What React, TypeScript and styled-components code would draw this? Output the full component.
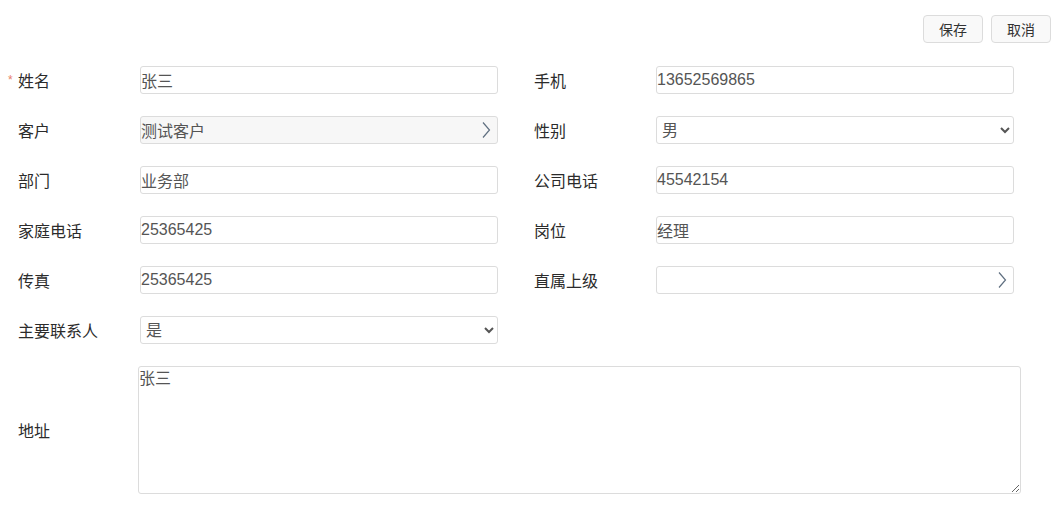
import React from "react";
import styled, { createGlobalStyle } from "styled-components";

const Global = createGlobalStyle`
  html, body { margin: 0; padding: 0; background: #fff; }
  body { font-family: "Liberation Sans", "Noto Sans CJK SC", sans-serif; color: #333; }
  * { box-sizing: border-box; }
`;

const Page = styled.div`
  width: 1057px;
  height: 513px;
  overflow: hidden;
  background: #fff;
`;

const Toolbar = styled.div`
  display: flex;
  justify-content: flex-end;
  gap: 8px;
  padding: 15px 6px 0 0;
`;

const Button = styled.button`
  width: 60px;
  height: 28px;
  border: 1px solid #dcdcdc;
  border-radius: 4px;
  background: #f9f9f9;
  color: #333;
  font-family: "Liberation Sans", "Noto Sans CJK SC", sans-serif;
  font-size: 14px;
  padding: 0;
  cursor: pointer;
`;

const Form = styled.div`
  display: flex;
  flex-direction: column;
  padding: 23px 0 0 8px;
`;

const Row = styled.div`
  display: flex;
  align-items: flex-start;
  height: 50px;
`;

const Field = styled.div<{ $gap?: number }>`
  display: flex;
  align-items: center;
  height: 28px;
  margin-right: ${(p) => p.$gap ?? 0}px;
`;

const Label = styled.label<{ $w: number }>`
  display: flex;
  align-items: center;
  width: ${(p) => p.$w}px;
  font-size: 16px;
  color: #2b2b2b;
  white-space: nowrap;
`;

const Star = styled.span<{ $show?: boolean }>`
  display: inline-block;
  width: 10px;
  color: #e8806a;
  font-size: 12px;
  visibility: ${(p) => (p.$show ? "visible" : "hidden")};
`;

const Input = styled.input<{ $readonly?: boolean }>`
  width: 358px;
  height: 28px;
  border: 1px solid #dcdcdc;
  border-radius: 3px;
  background: ${(p) => (p.$readonly ? "#f7f7f7" : "#fff")};
  color: #555;
  font-family: "Liberation Sans", "Noto Sans CJK SC", sans-serif;
  font-size: 16px;
  padding: 0 24px 0 0;
  outline: none;
`;

const PickerWrap = styled.div`
  position: relative;
  display: flex;
  align-items: center;
`;

const Chevron = styled.svg`
  position: absolute;
  right: 7px;
  top: 5px;
  width: 10px;
  height: 18px;
`;

const Select = styled.select`
  width: 358px;
  height: 28px;
  border: 1px solid #dcdcdc;
  border-radius: 3px;
  background: #fff;
  color: #555;
  font-family: "Liberation Sans", "Noto Sans CJK SC", sans-serif;
  font-size: 16px;
  padding: 0 0 0 1px;
  outline: none;
`;

const AreaRow = styled.div`
  display: flex;
  align-items: center;
`;

const TextArea = styled.textarea`
  width: 883px;
  height: 128px;
  border: 1px solid #dcdcdc;
  border-radius: 3px;
  color: #555;
  font-family: "Noto Sans CJK SC", sans-serif;
  font-size: 16px;
  line-height: 20px;
  padding: 0;
  margin: 0;
  outline: none;
`;

const Picker: React.FC<{ value: string; readonly?: boolean }> = ({ value, readonly }) => (
  <PickerWrap>
    <Input $readonly={readonly} value={value} readOnly />
    <Chevron viewBox="0 0 10 18">
      <path d="M2 1.5 L8.5 9 L2 16.5" fill="none" stroke="#5f6f80" strokeWidth="1.2" />
    </Chevron>
  </PickerWrap>
);

const L: React.FC<{ text: string; req?: boolean; w?: number }> = ({ text, req, w = 132 }) => (
  <Label $w={w}>
    <Star $show={req}>*</Star>
    {text}
  </Label>
);

export default function App() {
  return (
    <Page>
      <Global />
      <Toolbar>
        <Button>保存</Button>
        <Button>取消</Button>
      </Toolbar>
      <Form>
        <Row>
          <Field $gap={26}>
            <L text="姓名" req />
            <Input value="张三" readOnly />
          </Field>
          <Field>
            <L text="手机" />
            <Input value="13652569865" readOnly />
          </Field>
        </Row>
        <Row>
          <Field $gap={26}>
            <L text="客户" />
            <Picker value="测试客户" readonly />
          </Field>
          <Field>
            <L text="性别" />
            <Select defaultValue="男">
              <option>男</option>
              <option>女</option>
            </Select>
          </Field>
        </Row>
        <Row>
          <Field $gap={26}>
            <L text="部门" />
            <Input value="业务部" readOnly />
          </Field>
          <Field>
            <L text="公司电话" />
            <Input value="45542154" readOnly />
          </Field>
        </Row>
        <Row>
          <Field $gap={26}>
            <L text="家庭电话" />
            <Input value="25365425" readOnly />
          </Field>
          <Field>
            <L text="岗位" />
            <Input value="经理" readOnly />
          </Field>
        </Row>
        <Row>
          <Field $gap={26}>
            <L text="传真" />
            <Input value="25365425" readOnly />
          </Field>
          <Field>
            <L text="直属上级" />
            <Picker value="" />
          </Field>
        </Row>
        <Row>
          <Field>
            <L text="主要联系人" />
            <Select defaultValue="是">
              <option>是</option>
              <option>否</option>
            </Select>
          </Field>
        </Row>
        <AreaRow>
          <L text="地址" w={130} />
          <TextArea defaultValue="张三" />
        </AreaRow>
      </Form>
    </Page>
  );
}
